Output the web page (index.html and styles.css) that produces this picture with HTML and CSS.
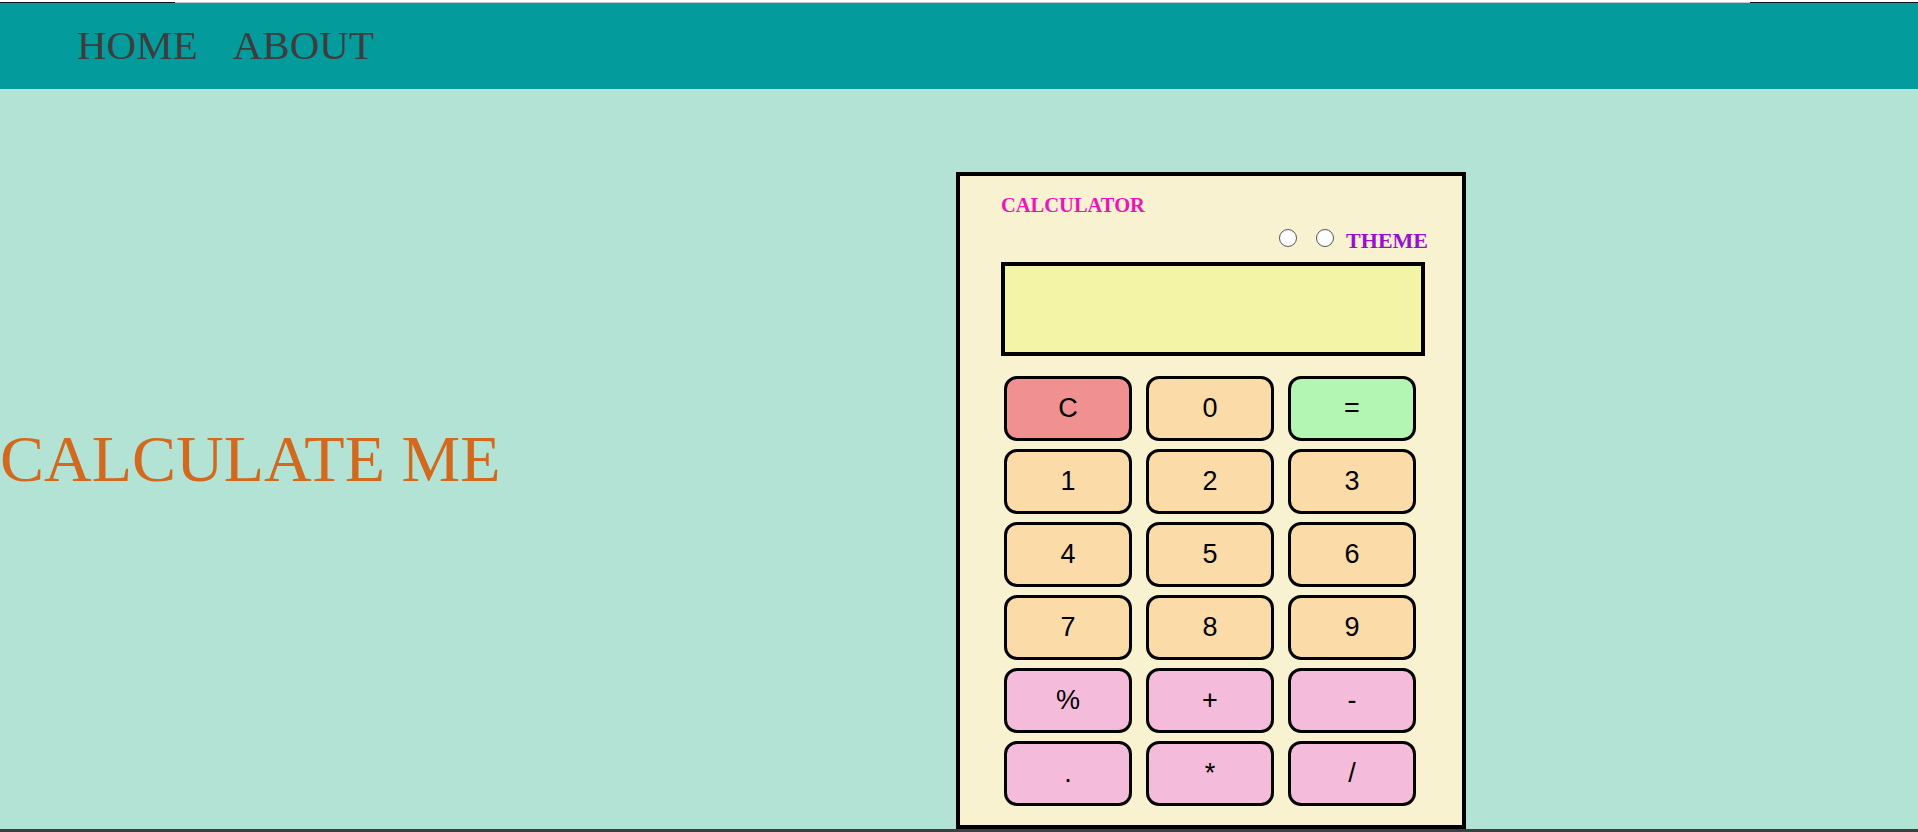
FILE: index.html
```html
<!DOCTYPE html>
<html lang="en">
<head>
<meta charset="utf-8">
<title>Calculator</title>
<link rel="stylesheet" href="styles.css">
</head>
<body>
<div class="topline"></div>
<header class="nav">
  <a class="nav-link" href="#">HOME</a>
  <a class="nav-link" href="#">ABOUT</a>
</header>
<main class="main">
  <h1 class="hero">CALCULATE ME</h1>
  <section class="calc">
    <h2 class="calc-title">CALCULATOR</h2>
    <div class="theme-row">
      <input class="radio" type="radio" name="theme">
      <input class="radio radio-second" type="radio" name="theme">
      <span class="theme-label">THEME</span>
    </div>
    <div class="display"></div>
    <div class="keys">
      <button class="key key-clear">C</button>
      <button class="key key-num">0</button>
      <button class="key key-eq">=</button>
      <button class="key key-num">1</button>
      <button class="key key-num">2</button>
      <button class="key key-num">3</button>
      <button class="key key-num">4</button>
      <button class="key key-num">5</button>
      <button class="key key-num">6</button>
      <button class="key key-num">7</button>
      <button class="key key-num">8</button>
      <button class="key key-num">9</button>
      <button class="key key-op">%</button>
      <button class="key key-op">+</button>
      <button class="key key-op">-</button>
      <button class="key key-op">.</button>
      <button class="key key-op">*</button>
      <button class="key key-op">/</button>
    </div>
  </section>
</main>
<div class="bottomline"></div>
</body>
</html>
```

FILE: styles.css
```css
html, body {
  margin: 0;
  padding: 0;
}
body {
  height: 832px;
  overflow: hidden;
  display: flex;
  flex-direction: column;
  background: #b3e3d4;
  font-family: "Liberation Serif", "Times New Roman", serif;
}
.topline {
  height: 2px;
  flex: 0 0 2px;
  background: #ffffff;
  border-bottom: 1px solid transparent;
  border-image: linear-gradient(to right, #111 0, #111 176px, #c9c9c9 176px, #c9c9c9 1749px, #111 1749px) 1;
}
.nav {
  flex: 0 0 86px;
  height: 86px;
  background: #049b9d;
  display: flex;
  align-items: center;
  padding-left: 77px;
  gap: 35px;
}
.nav-link {
  font-size: 41px;
  color: #3d3d3d;
  text-decoration: none;
  line-height: 1.107;
}
.main {
  flex: 0 0 740px;
  height: 740px;
  display: grid;
  grid-template-columns: 956px 510px;
  align-items: center;
}
.hero {
  margin: 0;
  font-size: 66px;
  font-weight: normal;
  color: #d2691e;
  line-height: 1.107;
  white-space: nowrap;
}
.calc {
  align-self: start;
  margin-top: 83px;
  box-sizing: border-box;
  width: 510px;
  border: 4px solid #000;
  background: #f8f2d1;
  padding: 17px 37px 19px 41px;
  display: flex;
  flex-direction: column;
}
.calc-title {
  margin: 0;
  font-size: 20.5px;
  font-weight: bold;
  line-height: 24px;
  color: #ee14b9;
}
.theme-row {
  margin: 12px -3px 0 0;
  height: 24px;
  display: flex;
  justify-content: flex-end;
  align-items: flex-start;
}
.radio {
  appearance: none;
  -webkit-appearance: none;
  box-sizing: border-box;
  width: 18px;
  height: 18px;
  margin: 0;
  border: 1.5px solid #555;
  border-radius: 50%;
  background: #fff;
}
.radio-second {
  margin-left: 19px;
}
.theme-label {
  margin-left: 12px;
  font-size: 22px;
  font-weight: bold;
  line-height: 24px;
  color: #9a0ed2;
}
.display {
  margin-top: 9px;
  box-sizing: border-box;
  width: 424px;
  height: 94px;
  border: 4px solid #000;
  background: #f3f4a6;
}
.keys {
  margin: 20px 0 0 3px;
  display: grid;
  grid-template-columns: repeat(3, 128px);
  grid-auto-rows: 65px;
  column-gap: 14px;
  row-gap: 8px;
}
.key {
  box-sizing: border-box;
  margin: 0;
  padding: 0;
  border: 3px solid #000;
  border-radius: 13px;
  font-family: "Liberation Sans", Arial, sans-serif;
  font-size: 27px;
  color: #000;
  display: flex;
  align-items: center;
  justify-content: center;
}
.key-clear { background: #f09090; }
.key-num { background: #fbdca8; }
.key-eq { background: #b3f5b3; }
.key-op { background: #f4bcda; }
.bottomline {
  flex: 0 0 3px;
  background: #3c4043;
}
```
